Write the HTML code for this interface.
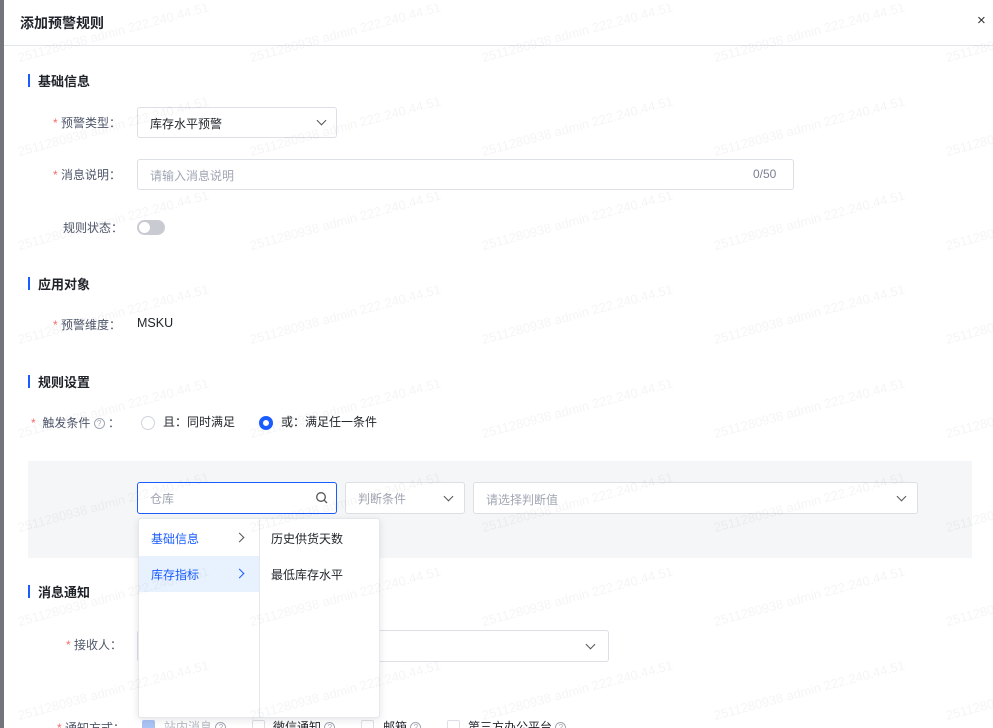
<!DOCTYPE html>
<html style="width:993px;height:728px;overflow:hidden"><head><meta charset="utf-8"><style>
*{box-sizing:border-box;margin:0;padding:0}
body{width:993px;height:728px;overflow:hidden;background:#fff;font-family:"Liberation Sans","Noto Sans CJK SC",sans-serif;font-size:12px;color:#1f2329;position:relative}
.a{position:absolute;white-space:nowrap}
.strip{left:0;top:0;width:4px;height:728px;background:#74757b}
.hdr{left:4px;top:45px;width:989px;height:1px;background:#e3e5ea}
.title{left:20px;top:13px;font-size:14px;font-weight:bold}
.sec{font-size:13px;font-weight:bold;color:#1f2329}
.sec:before{content:"";position:absolute;left:-10px;top:3px;width:2px;height:13px;background:#1a5cff}
.lbl{color:#4e5669;font-size:12px}
.star{color:#f56c6c}
.box{border:1px solid #dcdfe6;border-radius:3px;background:#fff}
.ph{color:#a0a6b3}
.chev{position:absolute;width:7px;height:7px;border-right:1.2px solid #555;border-bottom:1.2px solid #555;transform:rotate(45deg)}
.wm{position:absolute;color:rgba(0,0,0,0.045);font-size:13px;transform:rotate(-15deg);transform-origin:left bottom;white-space:nowrap;pointer-events:none;z-index:50}
.help{display:inline-block;width:11px;height:11px;border:1px solid #a0a6b3;border-radius:50%;font-size:8px;line-height:9px;text-align:center;color:#a0a6b3;vertical-align:1px}
.cb{position:absolute;width:13px;height:13px;border:1px solid #dcdfe6;border-radius:2px;background:#fff}
#wm{position:absolute;left:0;top:0;width:993px;height:728px;overflow:hidden;z-index:50}
</style></head><body>
<div class="a strip"></div>
<div class="a title">添加预警规则</div>
<div class="a" style="left:977px;top:12px;font-size:15px;color:#333">×</div>
<div class="a hdr"></div>

<div class="a sec" style="left:38px;top:71px">基础信息</div>
<div class="a lbl" style="left:53px;top:114px"><span class="star">*</span> 预警类型：</div>
<div class="a box" style="left:137px;top:107px;width:200px;height:31px"><span class="a" style="left:12px;top:7px">库存水平预警</span><i class="chev" style="left:180px;top:9px"></i></div>
<div class="a lbl" style="left:53px;top:166px"><span class="star">*</span> 消息说明：</div>
<div class="a box" style="left:137px;top:159px;width:657px;height:31px"><span class="a ph" style="left:12px;top:7px">请输入消息说明</span><span class="a ph" style="left:615px;top:7px;color:#7a8090">0/50</span></div>
<div class="a lbl" style="left:63px;top:219px">规则状态：</div>
<div class="a" style="left:137px;top:220px;width:28px;height:15px;border-radius:8px;background:#c8cbd2"><div class="a" style="left:2px;top:2px;width:11px;height:11px;border-radius:50%;background:#fff"></div></div>

<div class="a sec" style="left:38px;top:274px">应用对象</div>
<div class="a lbl" style="left:53px;top:316px"><span class="star">*</span> 预警维度：</div>
<div class="a" style="left:137px;top:316px;font-size:12.5px">MSKU</div>

<div class="a sec" style="left:38px;top:372px">规则设置</div>
<div class="a lbl" style="left:31px;top:414px"><span class="star">*</span>&nbsp; 触发条件 <span class="help">?</span> ：</div>
<div class="a" style="left:141px;top:416px;width:14px;height:14px;border:1px solid #cfd3da;border-radius:50%"></div>
<div class="a" style="left:163px;top:413px">且：同时满足</div>
<div class="a" style="left:259px;top:416px;width:14px;height:14px;border:4px solid #1a5cff;border-radius:50%;background:#fff"></div>
<div class="a" style="left:281px;top:413px">或：满足任一条件</div>

<div class="a" style="left:28px;top:461px;width:944px;height:97px;background:#f5f6f8"></div>
<div class="a box" style="left:137px;top:482px;width:200px;height:32px;border-color:#1a5cff"><span class="a ph" style="left:12px;top:7px">仓库</span>
<svg class="a" style="left:177px;top:8px" width="14" height="14" viewBox="0 0 14 14"><circle cx="6" cy="6" r="4.3" fill="none" stroke="#555" stroke-width="1.3"/><path d="M9.2 9.2L12 12" stroke="#555" stroke-width="1.3"/></svg></div>
<div class="a box" style="left:345px;top:482px;width:120px;height:32px"><span class="a ph" style="left:12px;top:7px">判断条件</span><i class="chev" style="left:99px;top:10px"></i></div>
<div class="a box" style="left:473px;top:482px;width:445px;height:32px"><span class="a ph" style="left:12px;top:8px">请选择判断值</span><i class="chev" style="left:424px;top:10px"></i></div>

<div class="a sec" style="left:38px;top:582px">消息通知</div>
<div class="a lbl" style="left:66px;top:636px"><span class="star">*</span> 接收人：</div>
<div class="a box" style="left:137px;top:630px;width:472px;height:32px"><i class="chev" style="left:449px;top:10px"></i></div>
<div class="a lbl" style="left:57px;top:719px"><span class="star">*</span> 通知方式：</div>
<div class="cb" style="left:142px;top:720px;background:#a9c3f5;border-color:#a9c3f5"></div>
<div class="a" style="left:164px;top:718px;color:#b4b9c3">站内消息 <span class="help">?</span></div>
<div class="cb" style="left:252px;top:720px"></div>
<div class="a" style="left:273px;top:718px">微信通知 <span class="help">?</span></div>
<div class="cb" style="left:361px;top:720px"></div>
<div class="a" style="left:383px;top:718px">邮箱 <span class="help">?</span></div>
<div class="cb" style="left:447px;top:720px"></div>
<div class="a" style="left:468px;top:718px">第三方办公平台 <span class="help">?</span></div>

<div class="a" style="left:138px;top:518px;width:242px;height:200px;background:#fff;border:1px solid #e4e7ed;border-radius:3px;box-shadow:0 2px 8px rgba(0,0,0,0.1);z-index:10">
 <div class="a" style="left:120px;top:0;width:1px;height:198px;background:#e4e7ed"></div>
 <div class="a" style="left:0;top:37px;width:120px;height:36px;background:#e8f2ff"></div>
 <div class="a" style="left:12px;top:11px;color:#1a5cff">基础信息</div>
 <i class="chev" style="left:97px;top:15px;transform:rotate(-45deg);border-color:#555"></i>
 <div class="a" style="left:12px;top:47px;color:#1a5cff">库存指标</div>
 <i class="chev" style="left:97px;top:51px;transform:rotate(-45deg);border-color:#1a5cff"></i>
 <div class="a" style="left:132px;top:11px">历史供货天数</div>
 <div class="a" style="left:132px;top:47px">最低库存水平</div>
</div>

<div id="wm"></div>
<script>
var h='';for(var r=0;r<8;r++){for(var c=0;c<5;c++){h+='<div class="wm" style="left:'+(20+c*232)+'px;top:'+(50+r*94)+'px">2511280938 admin 222.240.44.51</div>';}}
document.getElementById('wm').innerHTML=h;
</script>
</body></html>
